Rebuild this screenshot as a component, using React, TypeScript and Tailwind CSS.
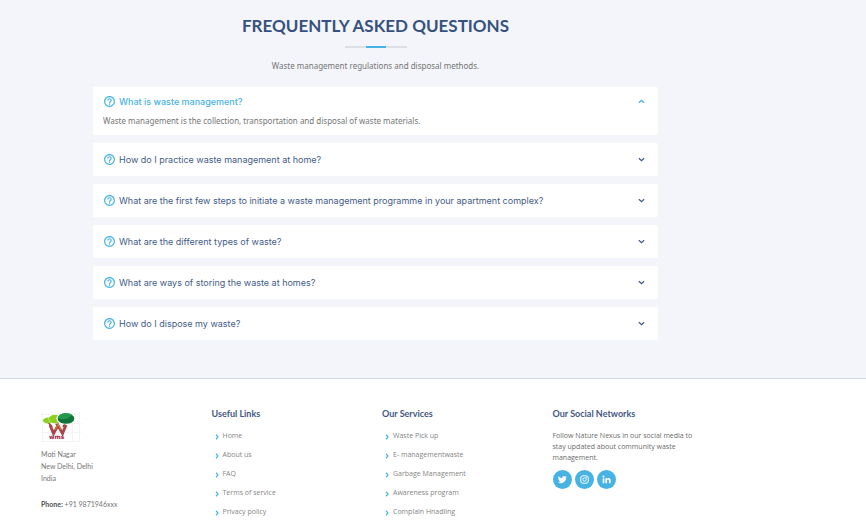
import { useState } from "react";

const faqs = [
  {
    q: "What is waste management?",
    a: "Waste management is the collection, transportation and disposal of waste materials.",
  },
  {
    q: "How do I practice waste management at home?",
    a: "Separate wet and dry waste, compost and recycle.",
  },
  {
    q: "What are the first few steps to initiate a waste management programme in your apartment complex?",
    a: "Form a group, explain segregation and arrange separate bins.",
  },
  { q: "What are the different types of waste?", a: "Organic, recyclable, hazardous and electronic waste." },
  { q: "What are ways of storing the waste at homes?", a: "Keep separate bins for wet and dry waste." },
  { q: "How do I dispose my waste?", a: "Hand over segregated waste to the collector." },
];

const usefulLinks = ["Home", "About us", "FAQ", "Terms of service", "Privacy policy"];
const services = ["Waste Pick up", "E- managementwaste", "Garbage Management", "Awareness program", "Complain Hnadling"];

function HelpIcon() {
  return (
    <svg viewBox="0 0 24 24" className="size-[13px] shrink-0 text-[#47b2e4]" fill="currentColor" stroke="currentColor" strokeWidth="0.2" aria-hidden="true">
      <path d="M12 2C6.5 2 2 6.5 2 12s4.500 10 10 10 10-4.500 10-10S17.500 2 12 2zm0 18c-4.400 0-8-3.600-8-8s3.600-8 8-8 8 3.600 8 8-3.600 8-8 8z" />
      <path d="M12 6c-2.200 0-4 1.800-4 4h2c0-1.100.9-2 2-2s2 .9 2 2c0 .8-.5 1.200-1.400 1.900-.9.700-1.600 1.400-1.600 3.100h2c0-.8.3-1.100 1.100-1.700.9-.7 1.900-1.600 1.900-3.300 0-2.200-1.800-4-4-4zM11 16h2v2h-2z" />
    </svg>
  );
}

function Chevron({ className }: { className: string }) {
  return (
    <svg viewBox="0 0 12 12" className={className} fill="none" stroke="currentColor" strokeWidth="2.3" aria-hidden="true">
      <path d="M1.500 4L6 8 10.500 4" />
    </svg>
  );
}

function Logo() {
  return (
    <svg viewBox="0 0 40 30" className="h-[30px] w-10" role="img" aria-label="WMS">
      <path d="M1.500 0v30M11.500 0v30M21.500 0v30M31.500 0v30M38.500 0v30M0 2.500h40M0 11.500h40M0 20.500h40M0 29.500h40" stroke="#f4f4f6" />
      <path d="M7 10l4 5M14 9l2 5M25 10l-3 5" stroke="#8b4a35" strokeWidth="1.500" />
      <ellipse cx="7" cy="8.500" rx="5" ry="3" fill="#8fce24" />
      <ellipse cx="14.500" cy="7" rx="7" ry="4.700" fill="#fff" />
      <ellipse cx="14" cy="7" rx="6.200" ry="4.200" fill="#8cd21c" />
      <ellipse cx="24.500" cy="6.500" rx="9.200" ry="6" fill="#fff" />
      <ellipse cx="25" cy="6.500" rx="8.300" ry="5.300" fill="#12733a" />
      <path d="M17 6c1-6 11-6 14-3-5 5-9 5-14 3z" fill="#23994b" />
      <path d="M9 13l3.500 8.500L17 13.500l4.500 8L25 13" fill="none" stroke="#a8474a" strokeWidth="2.900" />
      <path d="M14 18l3-6 3 6" fill="none" stroke="#d57a3a" strokeWidth="1.200" />
      <text x="8" y="27" fontSize="6" fontWeight="700" fill="#9c2344" fontFamily="DejaVu Sans, sans-serif">
        wms
      </text>
    </svg>
  );
}

function FooterLinks({ title, items }: { title: string; items: string[] }) {
  return (
    <nav aria-label={title}>
      <h4 className="font-[Lato,sans-serif] text-[9px] leading-3 font-bold text-[#3f5885]">{title}</h4>
      <ul className="mt-[7px]">
        {items.map((item) => (
          <li key={item} className="flex h-[19px] items-center gap-[3px] pl-0.5">
            <Chevron className="size-[6px] shrink-0 -rotate-90 text-[#47b2e4]" />
            <a href="#" className="text-[7px] text-[#858585]">
              {item}
            </a>
          </li>
        ))}
      </ul>
    </nav>
  );
}

const social = "flex size-[19px] items-center justify-center rounded-full bg-[#47b2e4] text-white";

export default function App() {
  const [open, setOpen] = useState(0);

  return (
    <div className="h-screen overflow-hidden bg-white font-['Open_Sans',sans-serif] text-[#6b6b6b]">
      <section className="border-b border-[#d3d7e2] bg-[#f3f5fa] pt-3 pb-[38px]">
        <div className="max-w-[751px] px-[93px]">
          <header className="flex flex-col items-center">
            <h2 className="text-center font-[Lato,sans-serif] text-[17px] leading-7 font-bold text-[#37517e]">
              FREQUENTLY ASKED QUESTIONS
            </h2>
            <div className="mt-1.5 flex h-0.5 w-[62px] justify-center bg-[#dddfe2]">
              <div className="w-5 bg-[#47b2e4]" />
            </div>
            <p className="mt-3 font-['Noto_Sans',sans-serif] text-[8px] leading-3 text-[#757575]">
              Waste management regulations and disposal methods.
            </p>
          </header>

          <ul className="mt-[15px] flex flex-col gap-2">
            {faqs.map((item, i) => {
              const active = open === i;
              return (
                <li key={item.q} className={active ? "rounded-xs bg-white px-2.5 pt-1.5 pb-2" : "rounded-xs bg-white px-2.5 py-2"}>
                  <h3>
                    <button
                      type="button"
                      aria-expanded={active}
                      onClick={() => setOpen(active ? -1 : i)}
                      className={
                        active
                          ? "flex w-full items-center gap-[3px] text-left font-[Inter,sans-serif] text-[9px] leading-[17px] font-medium text-[#47b2e4]"
                          : "flex w-full items-center gap-[3px] text-left font-[Inter,sans-serif] text-[9px] leading-[17px] text-[#435c88]"
                      }
                    >
                      <HelpIcon />
                      <span className="flex-1">{item.q}</span>
                      <Chevron className={active ? "mr-[3px] size-[7px] rotate-180" : "mr-[3px] size-[7px]"} />
                    </button>
                  </h3>
                  {active && (
                    <p className="mt-[5px] font-['Noto_Sans',sans-serif] text-[8px] leading-3 text-[#757575]">{item.a}</p>
                  )}
                </li>
              );
            })}
          </ul>
        </div>
      </section>

      <footer className="grid max-w-[723px] grid-cols-4 pt-[29px] pl-[41px]">
        <div className="pt-1">
          <Logo />
          <address className="mt-1.5 font-[Lato,sans-serif] text-[7px] leading-3 text-[#757575] not-italic">
            Moti Nagar
            <br />
            New Delhi, Delhi
            <br />
            India
            <p className="mt-3.5">
              <strong className="text-[#505050]">Phone:</strong> +91 9871946xxx
            </p>
          </address>
        </div>
        <FooterLinks title="Useful Links" items={usefulLinks} />
        <FooterLinks title="Our Services" items={services} />
        <div>
          <h4 className="font-[Lato,sans-serif] text-[9px] leading-3 font-bold text-[#3f5885]">Our Social Networks</h4>
          <p className="mt-2.5 w-[150px] text-[7px] leading-[11px]">
            Follow Nature Nexus in our social media to stay updated about community waste management.
          </p>
          <div className="mt-[7px] flex gap-[3px]">
            <a href="#" aria-label="Twitter" className={social}>
              <svg viewBox="0 0 24 24" className="size-[9px]" fill="currentColor" aria-hidden="true">
                <path d="M23.600 4.900c-.9.400-1.800.6-2.800.8 1-.6 1.800-1.600 2.100-2.700-.9.600-2 1-3.100 1.200a4.900 4.900 0 0 0-8.400 4.500C7.400 8.500 3.800 6.500 1.400 3.500a4.900 4.900 0 0 0 1.500 6.600c-.8 0-1.600-.2-2.200-.6v.1c0 2.400 1.700 4.400 3.900 4.800-.7.200-1.500.2-2.200.1.600 2 2.400 3.400 4.600 3.400A9.900 9.900 0 0 1-.3 20c2.200 1.400 4.800 2.200 7.500 2.200 9.100 0 14.300-7.700 14-14.600.9-.7 1.800-1.600 2.400-2.700z" />
              </svg>
            </a>
            <a href="#" aria-label="Instagram" className={social}>
              <svg viewBox="0 0 24 24" className="size-[9px]" fill="none" stroke="currentColor" strokeWidth="2.600" aria-hidden="true">
                <rect x="2" y="2" width="20" height="20" rx="6" />
                <circle cx="12" cy="12" r="4.600" />
                <circle cx="18" cy="6" r=".6" />
              </svg>
            </a>
            <a href="#" aria-label="LinkedIn" className={social}>
              <svg viewBox="0 0 24 24" className="size-[9px]" fill="currentColor" aria-hidden="true">
                <circle cx="4" cy="4" r="2.700" />
                <path d="M1.800 8.500h4.500V22H1.800zM9 8.500h4.300v1.900c.7-1.200 2.200-2.300 4.300-2.300 4.200 0 5.400 2.700 5.400 6.500V22h-4.500v-6.700c0-1.700-.2-3.400-2.300-3.400s-2.700 1.600-2.700 3.400V22H9z" />
              </svg>
            </a>
          </div>
        </div>
      </footer>
    </div>
  );
}
